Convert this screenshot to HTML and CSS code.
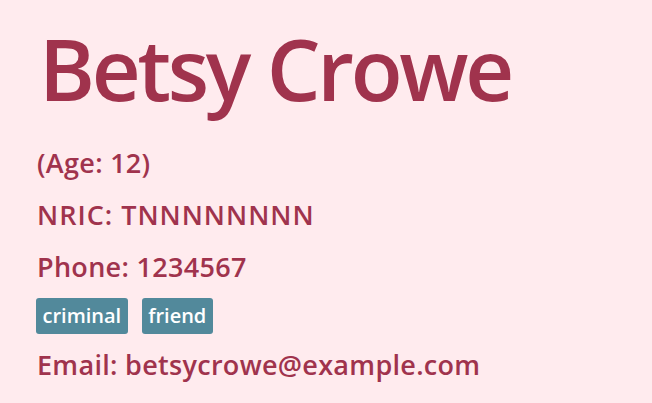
FILE: index.html
```html
<!DOCTYPE html>
<html lang="en">
<head>
<meta charset="utf-8">
<title>Betsy Crowe</title>
<link rel="stylesheet" href="styles.css">
</head>
<body>
<main class="card">
  <h1 class="name">Betsy Crowe</h1>
  <p class="field">(Age: 12)</p>
  <p class="field field-wide">NRIC: TNNNNNNNN</p>
  <p class="field">Phone: 1234567</p>
  <div class="tags">
    <span class="tag">criminal</span>
    <span class="tag">friend</span>
  </div>
  <p class="field">Email: betsycrowe@example.com</p>
</main>
</body>
</html>
```

FILE: styles.css
```css
html, body {
  margin: 0;
  padding: 0;
  background: #ffebee;
}
body {
  font-family: "Open Sans", "Noto Sans", sans-serif;
  font-weight: 600;
  color: #a0334d;
}
.card {
  padding: 18px 36px 0 37px;
  display: flex;
  flex-direction: column;
  align-items: flex-start;
}
.name {
  margin: 0 0 19px 2px;
  font-size: 85px;
  font-weight: 600;
  line-height: 100px;
  letter-spacing: -3.3px;
}
.field {
  margin: 0;
  font-size: 27px;
  line-height: 52px;
  letter-spacing: 0.3px;
}
.field-wide {
  letter-spacing: 1px;
}
.tags {
  display: flex;
  gap: 14px;
  margin: 5px 0 5px -1px;
}
.tag {
  background: #52899b;
  color: #ffffff;
  font-size: 20px;
  line-height: 36px;
  padding: 0 6.5px;
  border-radius: 3px;
}
```
